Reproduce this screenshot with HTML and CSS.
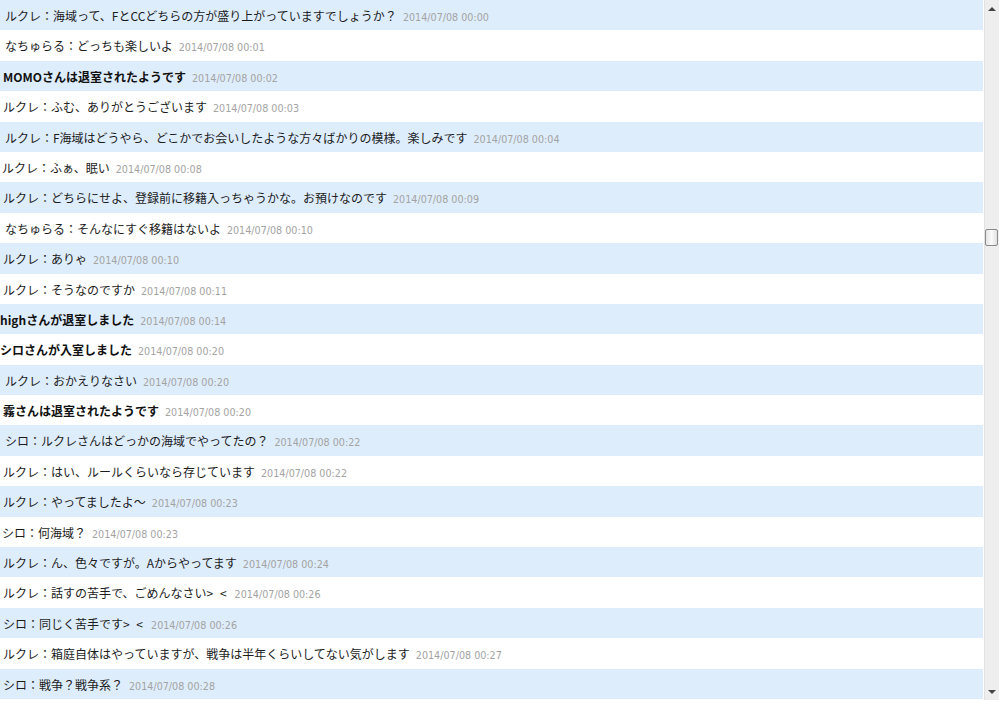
FILE: index.html
```html
<!DOCTYPE html>
<html lang="ja">
<head>
    <meta charset="UTF-8">
    <title>チャットログ</title>
    <link rel="stylesheet" href="styles.css">
</head>
<body>
    <div class="frame">
        <div class="log">
            <div class="row odd indent">ルクレ：海域って、FとCCどちらの方が盛り上がっていますでしょうか？<span class="time">2014/07/08 00:00</span></div>
            <div class="row indent">なちゅらる：どっちも楽しいよ<span class="time">2014/07/08 00:01</span></div>
            <div class="row odd sys">MOMOさんは退室されたようです<span class="time">2014/07/08 00:02</span></div>
            <div class="row">ルクレ：ふむ、ありがとうございます<span class="time">2014/07/08 00:03</span></div>
            <div class="row odd indent">ルクレ：F海域はどうやら、どこかでお会いしたような方々ばかりの模様。楽しみです<span class="time">2014/07/08 00:04</span></div>
            <div class="row flush">ルクレ：ふぁ、眠い<span class="time">2014/07/08 00:08</span></div>
            <div class="row odd">ルクレ：どちらにせよ、登録前に移籍入っちゃうかな。お預けなのです<span class="time">2014/07/08 00:09</span></div>
            <div class="row indent">なちゅらる：そんなにすぐ移籍はないよ<span class="time">2014/07/08 00:10</span></div>
            <div class="row odd">ルクレ：ありゃ<span class="time">2014/07/08 00:10</span></div>
            <div class="row">ルクレ：そうなのですか<span class="time">2014/07/08 00:11</span></div>
            <div class="row odd sys edge">highさんが退室しました<span class="time">2014/07/08 00:14</span></div>
            <div class="row sys edge">シロさんが入室しました<span class="time">2014/07/08 00:20</span></div>
            <div class="row odd indent">ルクレ：おかえりなさい<span class="time">2014/07/08 00:20</span></div>
            <div class="row sys">霧さんは退室されたようです<span class="time">2014/07/08 00:20</span></div>
            <div class="row odd indent">シロ：ルクレさんはどっかの海域でやってたの？<span class="time">2014/07/08 00:22</span></div>
            <div class="row">ルクレ：はい、ルールくらいなら存じています<span class="time">2014/07/08 00:22</span></div>
            <div class="row odd">ルクレ：やってましたよ～<span class="time">2014/07/08 00:23</span></div>
            <div class="row flush">シロ：何海域？<span class="time">2014/07/08 00:23</span></div>
            <div class="row odd">ルクレ：ん、色々ですが。Aからやってます<span class="time">2014/07/08 00:24</span></div>
            <div class="row">ルクレ：話すの苦手で、ごめんなさい<span class="face">&gt; &lt;</span><span class="time">2014/07/08 00:26</span></div>
            <div class="row odd">シロ：同じく苦手です<span class="face">&gt; &lt;</span><span class="time">2014/07/08 00:26</span></div>
            <div class="row">ルクレ：箱庭自体はやっていますが、戦争は半年くらいしてない気がします<span class="time">2014/07/08 00:27</span></div>
            <div class="row odd">シロ：戦争？戦争系？<span class="time">2014/07/08 00:28</span></div>
        </div>
        <div class="scrollbar">
            <div class="arrow up"></div>
            <div class="track">
                <div class="thumb"></div>
            </div>
            <div class="arrow down"></div>
        </div>
    </div>
</body>
</html>
```

FILE: styles.css
```css
body {
    margin: 0;
    background: #fff;
    font-family: "Noto Sans CJK JP", "Noto Sans", sans-serif;
    color: #1c1c1c;
}
.frame {
    display: flex;
    width: 999px;
    height: 700px;
}
.log {
    width: 984px;
    overflow: hidden;
}
.row {
    height: 30.4px;
    line-height: 31px;
    padding-left: 3px;
    font-size: 12px;
    white-space: nowrap;
    overflow: hidden;
    box-sizing: border-box;
    margin-right: 1px;
}
.row.odd {
    background-color: #deedfc;
}
.row.indent {
    padding-left: 5px;
}
.row.flush {
    padding-left: 2px;
}
.row.edge {
    padding-left: 0;
}
.row.sys {
    font-weight: bold;
    color: #111;
}
.face {
    letter-spacing: 2px;
}
.time {
    margin-left: 6px;
    font-family: "DejaVu Sans", Verdana, sans-serif;
    font-size: 9.6px;
    font-weight: normal;
    letter-spacing: 0;
    color: #a3a3a3;
}
.scrollbar {
    width: 15px;
    display: flex;
    flex-direction: column;
    background: #eeeeee;
    border-left: 1px solid #e2e2e2;
    box-sizing: border-box;
}
.arrow {
    height: 16px;
    position: relative;
}
.arrow::after {
    content: "";
    position: absolute;
    left: 3px;
    border-left: 4px solid transparent;
    border-right: 4px solid transparent;
}
.arrow.up::after {
    top: 7px;
    border-bottom: 4px solid #444;
}
.arrow.down::after {
    top: 6px;
    border-top: 4px solid #444;
}
.track {
    flex: 1;
    padding-top: 213px;
}
.thumb {
    height: 15px;
    margin: 0 1px 0 0;
    background: linear-gradient(to right, #e4e4e4, #fafafa 50%, #e0e0e0);
    border: 1px solid #8a8a8a;
    border-radius: 2px;
}
```
